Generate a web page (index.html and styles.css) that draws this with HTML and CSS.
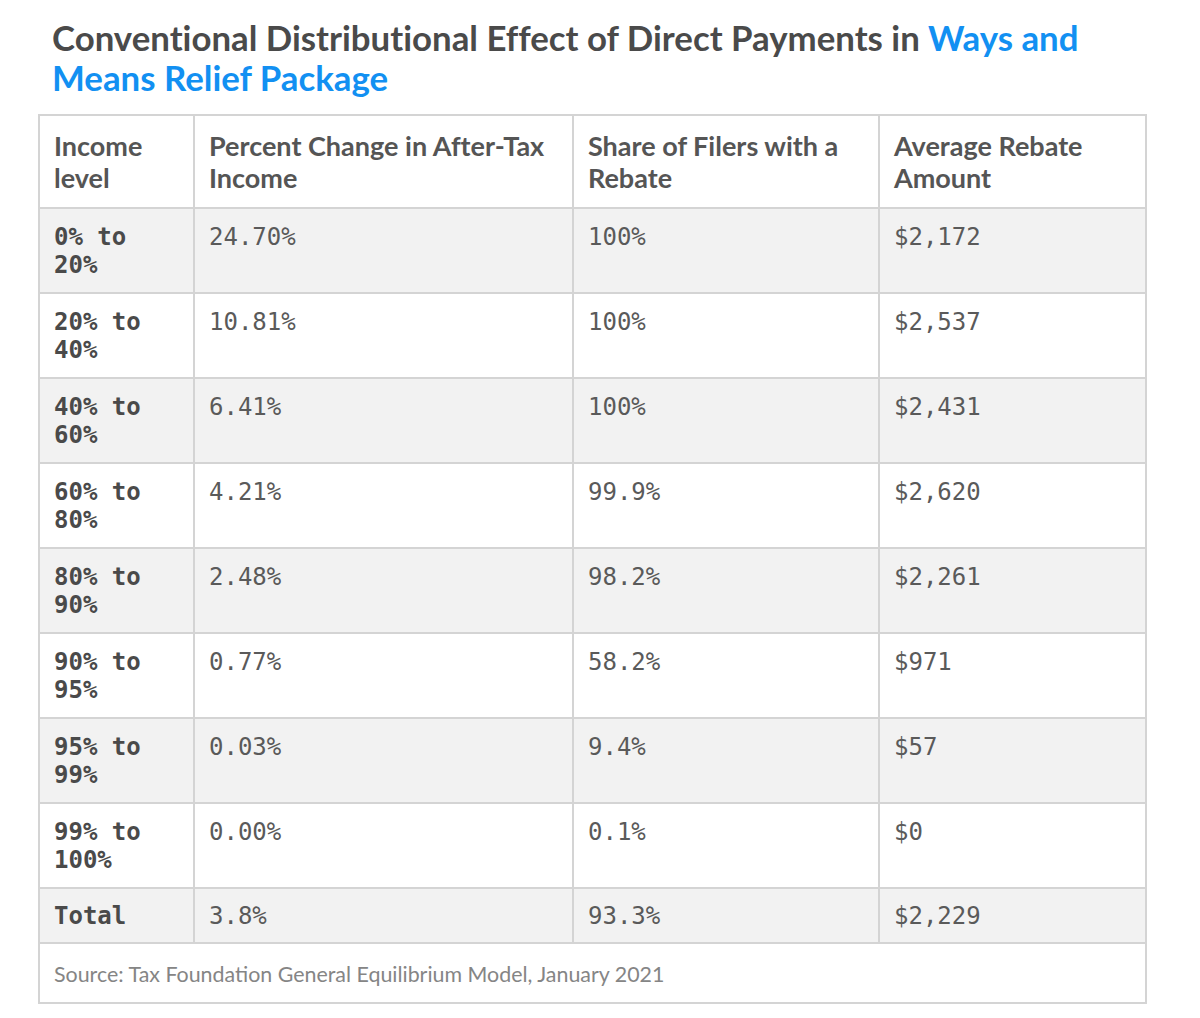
FILE: index.html
```html
<!DOCTYPE html>
<html lang="en">
<head>
<meta charset="utf-8">
<title>Conventional Distributional Effect of Direct Payments</title>
<link rel="stylesheet" href="styles.css">
</head>
<body>
<div class="page">
  <h1 class="title">Conventional Distributional Effect of Direct Payments in <span class="accent">Ways and Means Relief Package</span></h1>
  <table class="data">
    <colgroup>
      <col class="c1"><col class="c2"><col class="c3"><col class="c4">
    </colgroup>
    <thead>
      <tr><th>Income level</th><th>Percent Change in After-Tax Income</th><th>Share of Filers with a Rebate</th><th>Average Rebate Amount</th></tr>
    </thead>
    <tbody>
      <tr class="alt"><td class="lvl">0% to 20%</td><td>24.70%</td><td>100%</td><td>$2,172</td></tr>
      <tr><td class="lvl">20% to 40%</td><td>10.81%</td><td>100%</td><td>$2,537</td></tr>
      <tr class="alt"><td class="lvl">40% to 60%</td><td>6.41%</td><td>100%</td><td>$2,431</td></tr>
      <tr><td class="lvl">60% to 80%</td><td>4.21%</td><td>99.9%</td><td>$2,620</td></tr>
      <tr class="alt"><td class="lvl">80% to 90%</td><td>2.48%</td><td>98.2%</td><td>$2,261</td></tr>
      <tr><td class="lvl">90% to 95%</td><td>0.77%</td><td>58.2%</td><td>$971</td></tr>
      <tr class="alt"><td class="lvl">95% to 99%</td><td>0.03%</td><td>9.4%</td><td>$57</td></tr>
      <tr><td class="lvl">99% to 100%</td><td>0.00%</td><td>0.1%</td><td>$0</td></tr>
      <tr class="alt total"><td class="lvl">Total</td><td>3.8%</td><td>93.3%</td><td>$2,229</td></tr>
    </tbody>
    <tfoot>
      <tr><td colspan="4" class="source">Source: Tax Foundation General Equilibrium Model, January 2021</td></tr>
    </tfoot>
  </table>
</div>
</body>
</html>
```
FILE: styles.css
```css
html, body {
  margin: 0;
  padding: 0;
  background: #ffffff;
}
.page {
  padding: 18px 0 0 38px;
}
.title {
  margin: 0 0 16px 14px;
  font-family: "Lato", "Liberation Sans", sans-serif;
  font-weight: 700;
  font-size: 34.8px;
  line-height: 40px;
  color: #4a4a4a;
  max-width: 1080px;
  font-variant-ligatures: none;
}
.accent {
  color: #1290f2;
}
.data {
  width: 1107px;
  border-collapse: collapse;
  border: 2px solid #d4d4d4;
  table-layout: fixed;
}
.c1 { width: 155px; }
.c2 { width: 379px; }
.c3 { width: 306px; }
.c4 { width: 267px; }
.data th, .data td {
  border: 2px solid #d4d4d4;
  text-align: left;
  vertical-align: top;
}
.data th {
  font-family: "Lato", "Liberation Sans", sans-serif;
  font-weight: 700;
  font-size: 27px;
  line-height: 32px;
  color: #555555;
  padding: 14px 14px 13px 14px;
  background: #ffffff;
  font-variant-ligatures: none;
}
.data td {
  font-family: "DejaVu Sans Mono", "Liberation Mono", monospace;
  font-size: 24px;
  line-height: 28px;
  color: #5a5a5a;
  padding: 14px 14px 13px 14px;
}
.data td.lvl {
  font-weight: 700;
  color: #4a4a4a;
}
.data tr.alt td {
  background: #f2f2f2;
}
.data tr.total td {
  padding-top: 13px;
  padding-bottom: 12px;
}
.data td.source {
  font-family: "Lato", "Liberation Sans", sans-serif;
  font-size: 21.4px;
  line-height: 28px;
  color: #858585;
  padding: 16px 14px 14px 14px;
  background: #ffffff;
}
```
